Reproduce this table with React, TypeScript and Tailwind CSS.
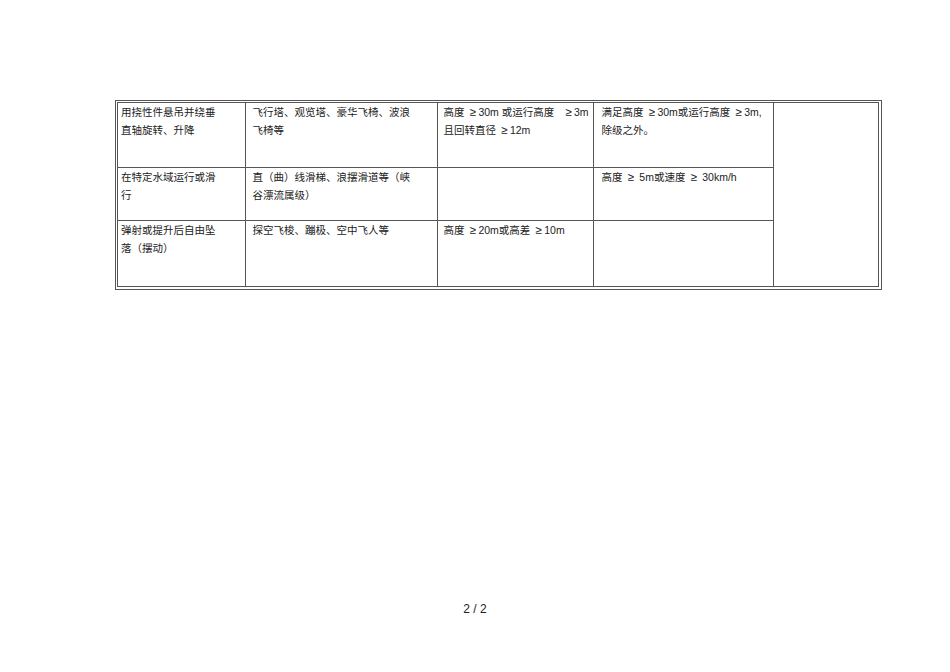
import React from "react"

const rows = [
  {
    kind: ["用挠性件悬吊并绕垂", "直轴旋转、升降"],
    examples: ["飞行塔、观览塔、豪华飞椅、波浪", "飞椅等"],
    limit: ["高度 ≥30m 或运行高度   ≥3m", "且回转直径 ≥12m"],
    rule: ["满足高度 ≥30m或运行高度 ≥3m,", "除级之外。"],
    h: "h-[64px]",
  },
  {
    kind: ["在特定水域运行或滑", "行"],
    examples: ["直（曲）线滑梯、浪摆滑道等（峡", "谷漂流属级）"],
    limit: [],
    rule: ["高度 ≥ 5m或速度 ≥ 30km/h"],
    h: "h-[53px]",
  },
  {
    kind: ["弹射或提升后自由坠", "落（摆动）"],
    examples: ["探空飞梭、蹦极、空中飞人等"],
    limit: ["高度 ≥20m或高差 ≥10m"],
    rule: [],
    h: "h-[66px]",
  },
]

// widen the ≥ sign like the full-width glyph in the document
function Line({ text }: { text: string }) {
  const parts = text.split("≥")
  return (
    <div className="whitespace-pre overflow-visible">
      {parts.map((p, i) => (
        <React.Fragment key={i}>
          {i > 0 && <span className="inline-block w-[11px] text-center text-[11.5px]">≥</span>}
          {p}
        </React.Fragment>
      ))}
    </div>
  )
}

function Lines({ lines }: { lines: string[] }) {
  return (
    <>
      {lines.map((l, i) => (
        <Line key={i} text={l} />
      ))}
    </>
  )
}

export default function App() {
  return (
    <div
      className="w-[950px] h-[672px] bg-white text-[#222] flex flex-col"
      style={{ fontFamily: '"Liberation Sans", "Noto Sans CJK SC", sans-serif' }}
    >
      <div className="pt-[100px] pl-[115px]">
        <div className="w-[767px] border-[3px] border-double border-[#555] border-r-4 border-b-4">
          <table className="w-[760px] border-collapse text-[10.5px] leading-[18px] table-fixed">
            <colgroup>
              <col className="w-[127px]" />
              <col className="w-[192px]" />
              <col className="w-[156px]" />
              <col className="w-[180px]" />
              <col className="w-[105px]" />
            </colgroup>
            <tbody>
              {rows.map((r, i) => (
                <tr key={i} className={r.h}>
                  <td className={`align-top pl-[3px] pt-0 border-r border-[#555] ${i < 2 ? "border-b" : ""}`}>
                    <Lines lines={r.kind} />
                  </td>
                  <td className={`align-top pl-[7px] pt-0 border-r border-[#555] ${i < 2 ? "border-b" : ""}`}>
                    <Lines lines={r.examples} />
                  </td>
                  <td className={`align-top pl-[6px] pt-0 border-r border-[#555] ${i < 2 ? "border-b" : ""}`}>
                    <Lines lines={r.limit} />
                  </td>
                  <td className={`align-top pl-[8px] pt-0 border-r border-[#555] ${i < 2 ? "border-b" : ""}`}>
                    <Lines lines={r.rule} />
                  </td>
                  {i === 0 && <td rowSpan={3} />}
                </tr>
              ))}
            </tbody>
          </table>
        </div>
      </div>
      <div className="mt-auto mb-[54px] text-center text-[12px]">2 / 2</div>
    </div>
  )
}
